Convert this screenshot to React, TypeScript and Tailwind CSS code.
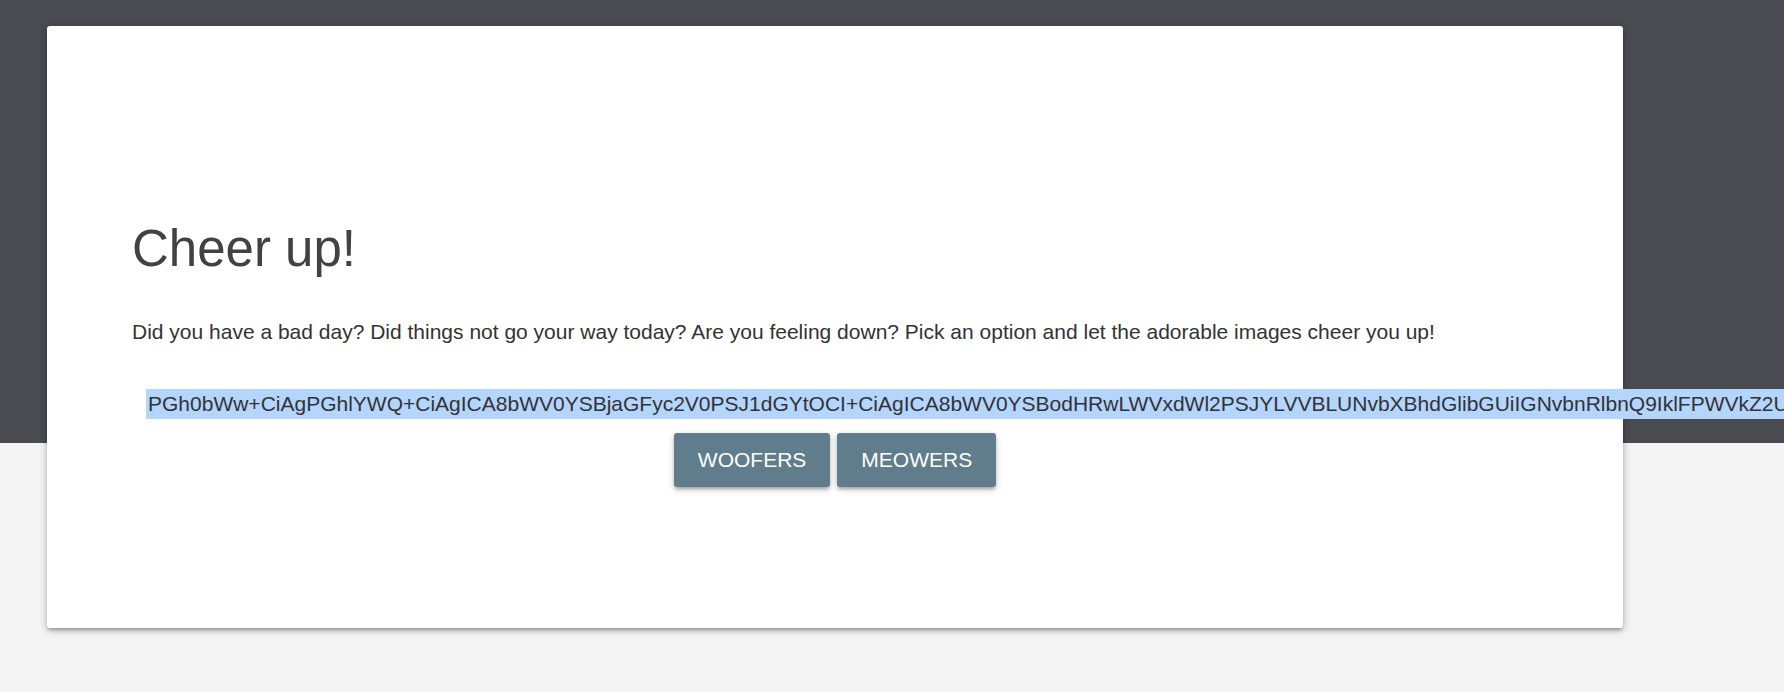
import type { ReactElement } from "react";

const encodedPage =
  "PGh0bWw+CiAgPGhlYWQ+CiAgICA8bWV0YSBjaGFyc2V0PSJ1dGYtOCI+CiAgICA8bWV0YSBodHRwLWVxdWl2PSJYLVVBLUNvbXBhdGlibGUiIGNvbnRlbnQ9IklFPWVkZ2UiPgogICAgPHRpdGxlPkNoZWVyIHVwITwvdGl0bGU+CiAgPC9oZWFkPgo=";

const buttonClass =
  "h-[54px] rounded-[3px] bg-[#607d8b] px-6 text-[21px] uppercase text-white shadow-[0_3px_3px_0_rgba(0,0,0,0.14),0_4px_2px_-3px_rgba(0,0,0,0.12),0_2px_7px_0_rgba(0,0,0,0.2)]";

export default function App(): ReactElement {
  return (
    <div
      className="h-[692px] w-full overflow-hidden bg-[linear-gradient(to_bottom,#4a4b51_443px,#f4f4f4_443px)] pt-[26px]"
      style={{ fontFamily: '"Liberation Sans", Arial, sans-serif' }}
    >
      <main className="ml-[47px] flex h-[602px] w-[1576px] flex-col rounded-[3px] bg-white pl-[85px] pt-[193px] shadow-[0_3px_3px_0_rgba(0,0,0,0.14),0_4px_2px_-3px_rgba(0,0,0,0.12),0_2px_8px_0_rgba(0,0,0,0.25)]">
        <h1 className="m-0 text-[51px] font-normal leading-[60px] text-[#424242]">
          Cheer up!
        </h1>
        <p className="mt-[38px] text-[21px] leading-[30px] text-[#333]">
          Did you have a bad day? Did things not go your way today? Are you
          feeling down? Pick an option and let the adorable images cheer you
          up!
        </p>
        <div className="mt-[42px] flex whitespace-nowrap pl-[14px] text-[21px] leading-[30px] text-[#333]">
          <span className="block h-[30px] shrink-0 bg-[#b4d5fe] px-[2px]">
            {encodedPage}
          </span>
        </div>
        <nav
          className="mt-[14px] flex justify-center gap-[7px] pr-[85px]"
          aria-label="Pick a cheer"
        >
          <button type="button" className={buttonClass}>
            Woofers
          </button>
          <button type="button" className={buttonClass}>
            Meowers
          </button>
        </nav>
      </main>
    </div>
  );
}
